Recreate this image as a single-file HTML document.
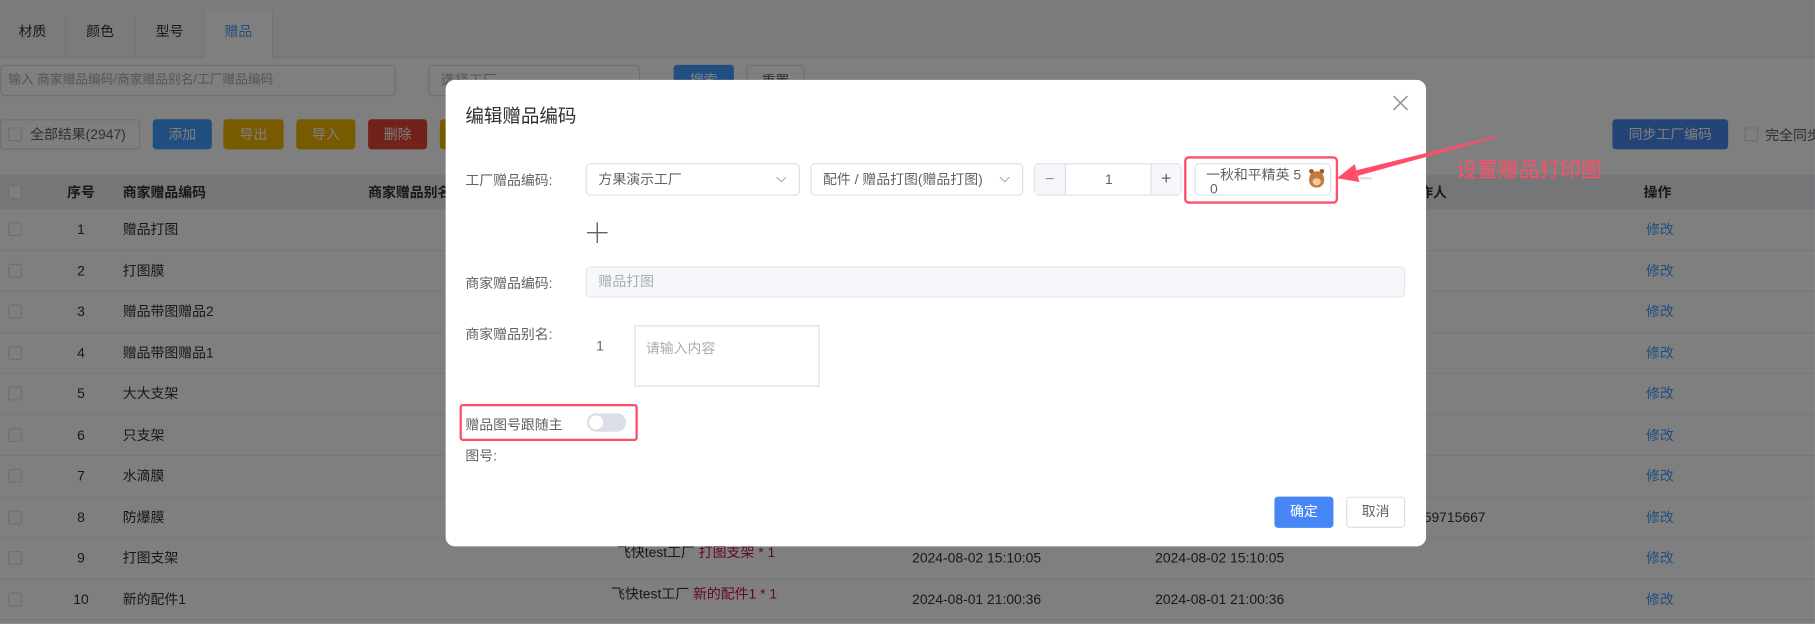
<!DOCTYPE html>
<html><head><meta charset="utf-8">
<style>
*{box-sizing:border-box;margin:0;padding:0}
html,body{width:1815px;height:624px;overflow:hidden;background:#fff}
body{font-family:"Liberation Sans","Noto Sans CJK SC",sans-serif;color:#333}
#w{position:absolute;left:0;top:0;width:1568px;height:539px;transform:scale(1.1575);transform-origin:0 0;font-size:12px}
.a{position:absolute}
.tabs{left:0;top:0;width:1568px;height:50px;background:#f5f7fa;border-bottom:1px solid #e4e7ed}
.tab{position:absolute;top:10px;height:40px;width:60px;border-right:1px solid #e4e7ed;line-height:34px;text-align:center;font-size:12px;color:#303133}
.inp{border:1px solid #dcdfe6;border-radius:4px;background:#fff;color:#a8abb2;padding-left:6px;line-height:25px}
.btn{border-radius:3px;color:#fff;text-align:center;line-height:26px;font-size:12px}
.th{background:#e9ecf1;left:0;top:151px;width:1568px;height:30px;font-weight:bold;color:#303133}
.row{left:0;width:1568px;height:35.5px;border-bottom:1px solid #ebeef5;background:#fff}
.cell{position:absolute;top:0;line-height:35px;font-size:12px;color:#303133}
.cb{position:absolute;left:7px;width:12px;height:12px;border:1px solid #dcdfe6;border-radius:2px;background:#fff}
.link{color:#409eff}
.ov{left:0;top:0;width:1568px;height:539px;background:rgba(0,0,0,0.5)}
.dlg{left:385px;top:69px;width:847px;height:403px;background:#fff;border-radius:8px}
.lbl{font-size:12px;color:#606266}
.sel{border:1px solid #dcdfe6;border-radius:4px;background:#fff;height:28px;line-height:26px;padding-left:10px;color:#606266;font-size:12px}
</style></head><body><div id="w">
<div class="a tabs">
<div class="tab" style="left:0;width:57px">材质</div>
<div class="tab" style="left:57px">颜色</div>
<div class="tab" style="left:117px">型号</div>
<div class="tab" style="left:177px;width:59px;background:#fff;color:#409eff;height:41px">赠品</div>
</div>
<div class="a inp" style="left:0;top:56px;width:342px;height:27px;font-size:11px">输入 商家赠品编码/商家赠品别名/工厂赠品编码</div>
<div class="a inp" style="left:370px;top:56px;width:183px;height:27px;padding-left:10px">选择工厂</div>
<div class="a btn" style="left:582px;top:56px;width:52px;background:#409eff">搜索</div>
<div class="a btn" style="left:645px;top:56px;width:50px;background:#fff;border:1px solid #dcdfe6;color:#606266">重置</div>
<div class="a" style="left:0;top:103px;width:121px;height:26px;border:1px solid #dcdfe6;border-radius:3px;background:#fff;line-height:24px;padding-left:25px;color:#606266">全部结果(2947)<div class="cb" style="top:6px;left:6px"></div></div>
<div class="a btn" style="left:132px;top:103px;width:51px;background:#409eff">添加</div>
<div class="a btn" style="left:193px;top:103px;width:52px;background:#f0b400">导出</div>
<div class="a btn" style="left:256px;top:103px;width:51px;background:#f0b400">导入</div>
<div class="a btn" style="left:318px;top:103px;width:51px;background:#e24434">删除</div>
<div class="a btn" style="left:380px;top:103px;width:51px;background:#f0b400">导</div>
<div class="a btn" style="left:1393px;top:103px;width:100px;height:26px;background:#4889f0;line-height:26px">同步工厂编码</div>
<div class="a" style="left:1507px;top:110px;line-height:14px;padding-left:18px;color:#606266;white-space:nowrap">完全同步<div class="cb" style="left:0;top:0"></div></div>
<div class="a th">
<div class="cb" style="top:9px"></div>
<div class="cell" style="left:58px;line-height:30px">序号</div>
<div class="cell" style="left:106px;line-height:30px">商家赠品编码</div>
<div class="cell" style="left:318px;line-height:30px">商家赠品别名</div>
<div class="cell" style="left:1214px;line-height:30px">制作人</div>
<div class="cell" style="left:1420px;line-height:30px">操作</div>
</div>
<div id="rows"></div>
<div class="a ov"></div>
<div class="a dlg">
<div class="a" style="left:17px;top:18px;font-size:16px;color:#303133">编辑赠品编码</div>
<svg class="a" style="left:818px;top:13px" width="14" height="14"><path d="M1 1L13 13M13 1L1 13" stroke="#909399" stroke-width="1.3"/></svg>
<div class="a lbl" style="left:17px;top:78px">工厂赠品编码:</div>
<div class="a sel" style="left:121px;top:72px;width:185px">方果演示工厂<svg class="a" style="right:10px;top:10px" width="10" height="7"><path d="M1 1L5 5L9 1" stroke="#a8abb2" fill="none"/></svg></div>
<div class="a sel" style="left:315px;top:72px;width:184px">配件 / 赠品打图(赠品打图)<svg class="a" style="right:10px;top:10px" width="10" height="7"><path d="M1 1L5 5L9 1" stroke="#a8abb2" fill="none"/></svg></div>
<div class="a" style="left:508px;top:72px;width:128px;height:28px;border:1px solid #dcdfe6;border-radius:4px">
<div class="a" style="left:0;top:0;width:27px;height:26px;background:#f5f7fa;border-right:1px solid #dcdfe6;text-align:center;line-height:25px;color:#909399;font-size:14px">−</div>
<div class="a" style="left:27px;top:0;width:74px;text-align:center;line-height:26px;color:#606266">1</div>
<div class="a" style="right:0;top:0;width:26px;height:26px;background:#f5f7fa;border-left:1px solid #dcdfe6;text-align:center;line-height:25px;color:#606266;font-size:15px">+</div>
</div>
<div class="a" style="left:638px;top:66px;width:133px;height:41px;border:2px solid #ff4d6a;border-radius:4px"></div>
<div class="a" style="left:647px;top:72px;width:118px;height:28px;border:1px solid #dcdfe6;border-radius:4px;font-size:12px;line-height:12px;color:#606266;padding:3px 0 0 9px">一秋和平精英 5<br>&nbsp;0
<div class="a" style="left:98px;top:4px;width:4px;height:4px;border-radius:50%;background:#a25a25"></div>
<div class="a" style="left:107px;top:4px;width:4px;height:4px;border-radius:50%;background:#a25a25"></div>
<div class="a" style="left:98px;top:6px;width:13px;height:14px;border-radius:50% 50% 45% 45%;background:#c47a3c"><div class="a" style="left:3px;top:6px;width:7px;height:6px;background:#f2c9a0;border-radius:3px"></div></div></div>
<div class="a" style="left:790px;top:84px;width:10px;height:1.5px;background:#dcdfe6"></div>
<svg class="a" style="left:122px;top:123px" width="18" height="18"><path d="M9 0V18M0 9H18" stroke="#606266" stroke-width="1.2"/></svg>
<div class="a lbl" style="left:17px;top:167px">商家赠品编码:</div>
<div class="a" style="left:121px;top:161px;width:708px;height:27px;background:#f5f7fa;border:1px solid #e4e7ed;border-radius:4px;color:#a8abb2;line-height:25px;padding-left:10px">赠品打图</div>
<div class="a lbl" style="left:17px;top:211px">商家赠品别名:</div>
<div class="a" style="left:130px;top:223px;color:#606266">1</div>
<div class="a" style="left:163px;top:212px;width:160px;height:53px;border:1px solid #dcdfe6;color:#a8abb2;padding:10px 0 0 9px">请输入内容</div>
<div class="a" style="left:12px;top:280px;width:154px;height:32px;border:2px solid #ff4d6a;border-radius:3px"></div>
<div class="a lbl" style="left:17px;top:289px">赠品图号跟随主</div>
<div class="a" style="left:122px;top:288px;width:34px;height:16px;border-radius:8px;background:#dcdfe6"><div class="a" style="left:2px;top:2px;width:12px;height:12px;border-radius:50%;background:#fff"></div></div>
<div class="a lbl" style="left:17px;top:316px">图号:</div>
<div class="a btn" style="left:716px;top:360px;width:51px;height:27px;background:#4787f5;line-height:27px">确定</div>
<div class="a btn" style="left:778px;top:360px;width:51px;height:27px;background:#fff;border:1px solid #dcdfe6;color:#606266;line-height:25px">取消</div>
</div>
<svg class="a" style="left:0;top:0" width="1568" height="539"><path d="M1293 117.3L1293.3 118.6L1173 151.9L1171.8 147.1Z" fill="#ff4d6a"/><path d="M1155 154L1170.4 141.8L1174.4 157.2Z" fill="#ff4d6a"/></svg>
<div class="a" style="left:1258px;top:133px;font-size:18px;color:#ff4d6a">设置赠品打印图</div>
</div>
<script>
var d=[["赠品打图"],["打图膜"],["赠品带图赠品2"],["赠品带图赠品1"],["大大支架"],["只支架"],["水滴膜"],["防爆膜"],["打图支架"],["新的配件1"]];
var h="";
for(var i=0;i<10;i++){var t=181+i*35.5;h+='<div class="a row" style="top:'+t+'px"><div class="cb" style="top:11px"></div><div class="cell" style="left:0;width:140px;text-align:center">'+(i+1)+'</div><div class="cell" style="left:106px">'+d[i][0]+'</div>';
if(i==7)h+='<div class="cell" style="left:1230px">59715667</div>';
if(i>=8){h+='<div class="cell" style="left:'+(i==8?533:528)+'px;top:-5px">飞快test工厂 <span style="color:#c0143c">'+(i==8?'打图支架 * 1':'新的配件1 * 1')+'</span></div><div class="cell" style="left:788px">'+(i==8?'2024-08-02 15:10:05':'2024-08-01 21:00:36')+'</div><div class="cell" style="left:998px">'+(i==8?'2024-08-02 15:10:05':'2024-08-01 21:00:36')+'</div>';}
h+='<div class="cell link" style="left:1422px">修改</div></div>';}
document.getElementById("rows").innerHTML=h;
</script>
</body></html>
